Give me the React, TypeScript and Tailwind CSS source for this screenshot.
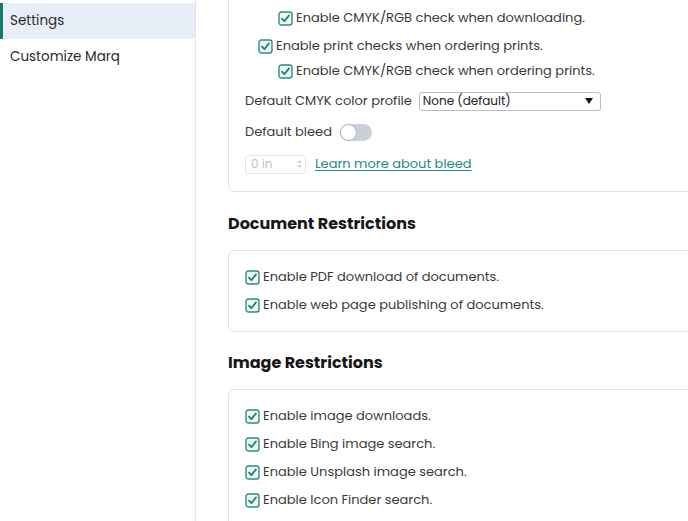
import { ReactNode } from 'react';

const font = { fontFamily: 'Poppins, "Noto Sans", "Open Sans", sans-serif' };

const Check = ({ label, indent = 0 }: { label: string; indent?: number }) => (
  <div className={`flex items-center gap-[3px] h-[18px] ${indent === 2 ? 'pl-[33px]' : indent === 1 ? 'pl-[13px]' : ''}`}>
    <svg width="15" height="15" viewBox="0 0 15 15" className="shrink-0">
      <rect x="1" y="1" width="13" height="13" rx="2.5" fill="#eef8f6" stroke="#2f8c80" strokeWidth="1.4" />
      <path d="M4 7.6 L6.4 10.2 L11 4.4" fill="none" stroke="#1f7f72" strokeWidth="1.8" strokeLinecap="round" strokeLinejoin="round" />
    </svg>
    <span className="text-[13px] text-[#3a3a3a] whitespace-nowrap">{label}</span>
  </div>
);

const Card = ({ children, className = '' }: { children: ReactNode; className?: string }) => (
  <div className={`w-[520px] border border-[#dde1e8] rounded-md px-4 ${className}`}>{children}</div>
);

export default function App() {
  return (
    <div className="w-full h-screen overflow-hidden flex bg-white" style={font}>
      <div className="w-[196px] shrink-0 border-r border-[#e1e5ec] pt-[3px]">
        <div className="h-[36px] flex items-center bg-[#e8eef7] border-l-[3px] border-[#127a6c] pl-[7px] text-[13.5px] text-[#2b2b2b]">
          Settings
        </div>
        <div className="h-[36px] flex items-center pl-[10px] text-[13.5px] text-[#2b2b2b]">
          Customize Marq
        </div>
      </div>

      <div className="flex-1 pl-[32px] -mt-[26px]">
        <Card className="pt-[6px] pb-[18px]">
          <div className="flex flex-col">
            <div className="mb-[10px]"><Check label="Enable print checks when downloading." indent={1} /></div>
            <div className="mb-[10px]"><Check label="Enable CMYK/RGB check when downloading." indent={2} /></div>
            <div className="mb-[7px]"><Check label="Enable print checks when ordering prints." indent={1} /></div>
            <Check label="Enable CMYK/RGB check when ordering prints." indent={2} />
            <div className="flex items-center gap-[7px] mt-[12px] h-[18px]">
              <span className="text-[13px] text-[#3a3a3a]">Default CMYK color profile</span>
              <div className="w-[182px] h-[19px] border border-[#b7bcc5] rounded-[3px] flex items-center justify-between px-[3px] text-[12px] text-[#222]">
                <span>None (default)</span>
                <svg width="8" height="6" viewBox="0 0 8 6" className="mr-[4px]"><path d="M0 0 H8 L4 6 Z" fill="#111" /></svg>
              </div>
            </div>
            <div className="flex items-center gap-[8px] mt-[13px] h-[18px]">
              <span className="text-[13px] text-[#3a3a3a]">Default bleed</span>
              <div className="w-[32px] h-[17px] rounded-full bg-[#c9d0d9] relative">
                <div className="absolute left-0 top-0 w-[17px] h-[17px] rounded-full bg-white border border-[#aab1bb]" />
              </div>
            </div>
            <div className="flex items-center gap-[9px] mt-[14px] h-[18px]">
              <div className="w-[61px] h-[19px] border border-[#e2e5ea] rounded-[3px] flex items-center justify-between pl-[5px] pr-[3px]">
                <span className="text-[12px] text-[#c3c3c3]">0 in</span>
                <svg width="5" height="10" viewBox="0 0 5 10"><path d="M0 4 L2.5 1 L5 4 Z M0 6 L2.5 9 L5 6 Z" fill="#d3d3d3" /></svg>
              </div>
              <a className="text-[13px] text-[#1d8a7c] underline underline-offset-2">Learn more about bleed</a>
            </div>
          </div>
        </Card>

        <h2 className="text-[16px] font-bold text-[#161616] mt-[20px] mb-[14px] leading-6">Document Restrictions</h2>
        <Card className="py-[17px]">
          <div className="flex flex-col gap-[10px]">
            <Check label="Enable PDF download of documents." />
            <Check label="Enable web page publishing of documents." />
          </div>
        </Card>

        <h2 className="text-[16px] font-bold text-[#161616] mt-[19px] mb-[14px] leading-6">Image Restrictions</h2>
        <Card className="py-[17px]">
          <div className="flex flex-col gap-[10px]">
            <Check label="Enable image downloads." />
            <Check label="Enable Bing image search." />
            <Check label="Enable Unsplash image search." />
            <Check label="Enable Icon Finder search." />
          </div>
        </Card>
      </div>
    </div>
  );
}
